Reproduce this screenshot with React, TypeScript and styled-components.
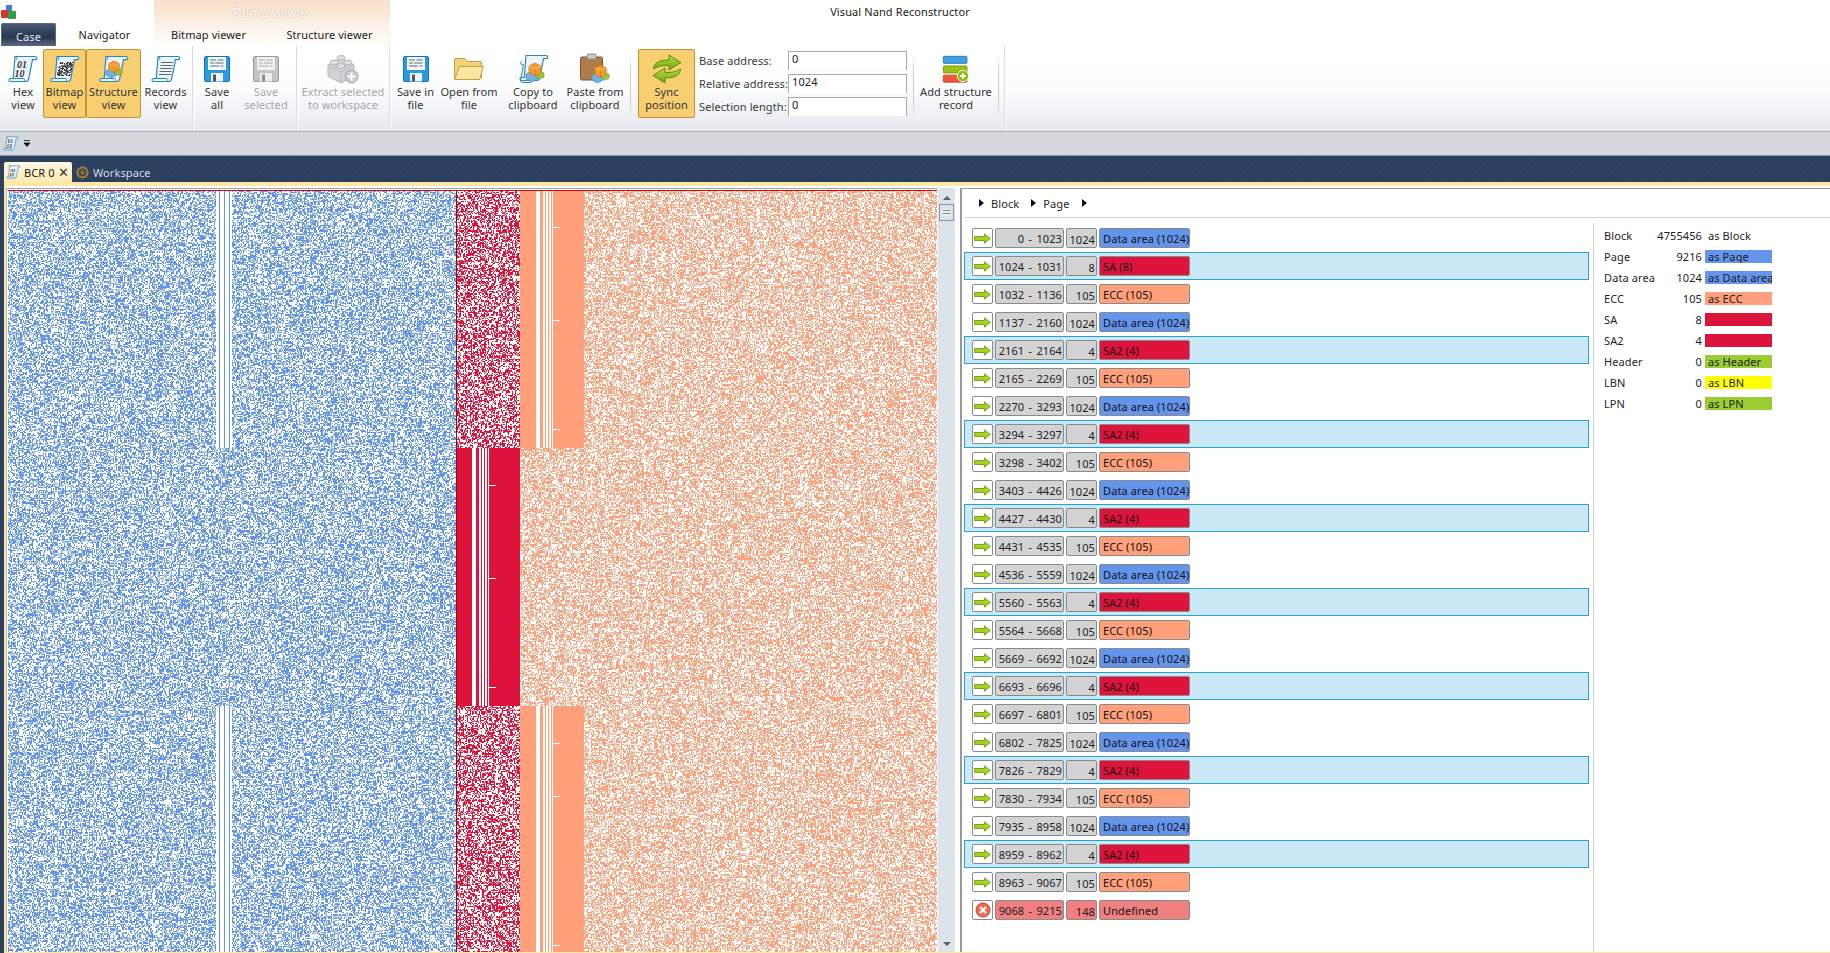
import React, { useEffect, useRef } from 'react';
import styled, { createGlobalStyle } from 'styled-components';

const BLUE = '#6495ed';
const CRIMSON = '#dc143c';
const SALMON = '#ffa07a';
const GREEN = '#9acd32';
const YELLOW = '#ffff00';
const CORAL = '#f08080';

const GlobalStyle = createGlobalStyle`
    html, body, #root {
        margin: 0;
        height: 100%;
    }
    body {
        font-family: "Noto Sans", "Open Sans", sans-serif;
        font-size: 11px;
        letter-spacing: 0.1px;
        color: #1b1b1b;
        background: #fff;
        overflow: hidden;
    }
`;

const Page = styled.div`
    width: 1830px;
    height: 953px;
    display: flex;
    flex-direction: column;
    position: relative;
    overflow: hidden;
`;

// --- header ---
const ContextBand = styled.div`
    position: absolute;
    left: 154px;
    top: 0;
    width: 236px;
    height: 46px;
    background: linear-gradient(#f7dfc8 0%, #fbeee0 45%, #ffffff 100%);
    text-align: center;
    line-height: 26px;
    color: #fff;
    font-size: 12px;
    text-shadow: 0 0 2px #c9a98c;
    padding-right: 2px;
    box-sizing: border-box;
`;

const TitleBar = styled.div`
    height: 23px;
    display: flex;
    align-items: center;
    justify-content: center;
    padding-right: 30px;
    position: relative;
    color: #1a1a1a;
`;

const AppLogo = styled.svg`
    position: absolute;
    left: 1px;
    top: 5px;
`;

const TabStrip = styled.div`
    height: 23px;
    display: flex;
    position: relative;
    padding-left: 1px;
`;

const CaseTab = styled.div`
    width: 55px;
    display: flex;
    align-items: center;
    justify-content: center;
    padding-top: 2px;
    box-sizing: border-box;
    color: #e6eaf0;
    border: 1px solid #5b6a80;
    border-bottom: none;
    border-radius: 2px 2px 0 0;
    background: linear-gradient(#4a5a74 0%, #2e3e5a 45%, #28374f 60%, #5b6a82 100%);
`;

const RibbonTab = styled.div<{ $w: number; $ml?: number; $active?: boolean }>`
    width: ${(p) => p.$w}px;
    margin-left: ${(p) => p.$ml || 0}px;
    display: flex;
    align-items: center;
    justify-content: center;
    box-sizing: border-box;
    padding-bottom: 1px;
    border: 1px solid ${(p) => (p.$active ? '#fdf3e8' : 'transparent')};
    border-bottom: none;
    border-radius: 2px 2px 0 0;
`;

const Ribbon = styled.div`
    height: 85px;
    display: flex;
    box-sizing: border-box;
    padding-left: 3px;
    background: linear-gradient(#ffffff 0%, #fbfcfc 50%, #e6e9ee 100%);
`;

const GroupEdge = styled.div<{ $ml?: number }>`
    width: 2px;
    margin-left: ${(p) => p.$ml || 0}px;
    flex: none;
    background: linear-gradient(90deg, #d8dbe0 50%, #ffffff 50%);
`;

const InnerSep = styled.div<{ $ml?: number; $mr?: number }>`
    width: 1px;
    height: 62px;
    margin: 10px ${(p) => p.$mr || 0}px 0 ${(p) => p.$ml || 0}px;
    flex: none;
    background: linear-gradient(#ffffff00, #c9ccd1 25%, #c9ccd1 75%, #ffffff00);
`;

const RibbonButton = styled.div<{ $w: number; $on?: boolean; $off?: boolean }>`
    width: ${(p) => p.$w}px;
    height: 69px;
    margin-top: 3px;
    flex: none;
    box-sizing: border-box;
    display: flex;
    flex-direction: column;
    align-items: center;
    padding-top: 3px;
    border: 1px solid ${(p) => (p.$on ? '#c2903f' : 'transparent')};
    border-radius: 2px;
    background: ${(p) => (p.$on ? '#f7cf70' : 'none')};
    color: ${(p) => (p.$off ? '#a6a8ab' : '#333')};
`;

const IconSlot = styled.div`
    height: 31px;
    display: flex;
    align-items: center;
    justify-content: center;
`;

const ButtonLabel = styled.div`
    line-height: 13px;
    text-align: center;
    white-space: pre;
    margin-top: 1px;
`;

const AddressFields = styled.div`
    width: 209px;
    margin: 5px 0 0 4px;
    flex: none;
    display: grid;
    grid-template-columns: 89px 119px;
    grid-auto-rows: 19px;
    row-gap: 4px;
    color: #3b3b3b;
`;

const FieldLabel = styled.div`
    line-height: 19px;
    white-space: nowrap;
`;

const FieldBox = styled.div`
    border: 1px solid #ababab;
    border-bottom: none;
    background: #fff;
    padding: 0 3px;
    line-height: 13px;
    color: #222;
`;

const ToolStrip = styled.div`
    height: 24px;
    box-sizing: border-box;
    border-top: 1px solid #a6adb5;
    background: #d5d8dd;
    display: flex;
    align-items: center;
    gap: 5px;
    padding-left: 3px;
`;

const DocTabs = styled.div`
    height: 27px;
    box-sizing: border-box;
    padding: 6px 0 0 4px;
    display: flex;
    align-items: stretch;
    border-top: 1px solid #8c95a3;
    background: repeating-linear-gradient(135deg, #2b3e5d 0 2px, #2d4160 2px 4px);
`;

const ActiveDocTab = styled.div`
    width: 68px;
    box-sizing: border-box;
    display: flex;
    align-items: center;
    padding: 0 3px 0 2px;
    gap: 3px;
    white-space: nowrap;
    color: #1a1a1a;
    background: linear-gradient(#fff9e6, #ffe9ac);
    border-radius: 2px 2px 0 0;
`;

const CloseMark = styled.span`
    margin-left: auto;
    font-size: 13px;
    line-height: 13px;
    color: #333;
`;

const IdleDocTab = styled.div`
    display: flex;
    align-items: center;
    gap: 3px;
    padding-left: 3px;
    color: #d8dee8;
`;

// --- document ---
const DocArea = styled.div`
    flex: 1;
    min-height: 0;
    padding-left: 4px;
    background: #2c3f5e;
    display: flex;
`;

const DocFrame = styled.div`
    flex: 1;
    min-width: 0;
    box-sizing: border-box;
    padding: 4px 0 1px 2px;
    background: #ffe8a6;
    display: flex;
`;

const DocBody = styled.div`
    flex: 1;
    min-width: 0;
    padding-top: 2px;
    background: #fff;
    display: flex;
`;

const BitmapPane = styled.div`
    width: 931px;
    flex: none;
    display: flex;
    box-sizing: border-box;
    border-left: 1px solid #b5b5b5;
    padding-left: 1px;
    border-top: 1px solid #a5a5a5;
`;

const BitmapCanvas = styled.canvas`
    display: block;
    margin-top: 1px;
`;

const ScrollBar = styled.div`
    width: 17px;
    margin-left: 1px;
    flex: none;
    background: #dde3ea;
    display: flex;
    flex-direction: column;
    align-items: center;
    padding-top: 8px;
    box-sizing: border-box;
`;

const ScrollArrow = styled.div<{ $down?: boolean }>`
    width: 0;
    height: 0;
    border-left: 4px solid transparent;
    border-right: 4px solid transparent;
    border-${(p) => (p.$down ? 'top' : 'bottom')}: 4px solid #56606c;
    ${(p) => (p.$down ? 'margin-top: auto; margin-bottom: 6px;' : '')}
`;

const ScrollThumb = styled.div`
    width: 15px;
    height: 17px;
    margin-top: 4px;
    box-sizing: border-box;
    border: 1px solid #8d97a3;
    background: repeating-linear-gradient(#eef2f6 0 2px, #7d8894 2px 3px);
    background-clip: content-box;
    padding: 4px 3px;
`;

const StructurePane = styled.div`
    margin-left: 5px;
    flex: 1;
    min-width: 0;
    display: flex;
    flex-direction: column;
    box-sizing: border-box;
    border-left: 2px solid #9a9a9a;
    border-top: 1px solid #9a9a9a;
`;

const Breadcrumb = styled.div`
    height: 29px;
    flex: none;
    box-sizing: border-box;
    margin-left: 2px;
    border-bottom: 1px solid #d4d4d4;
    display: flex;
    align-items: center;
    padding-left: 15px;
    color: #1f1f1f;
`;

const CrumbArrow = styled.span`
    width: 0;
    height: 0;
    border-top: 4px solid transparent;
    border-bottom: 4px solid transparent;
    border-left: 5px solid #111;
    margin-right: 7px;
`;

const CrumbText = styled.span`
    margin-right: 12px;
`;

const StructureBody = styled.div`
    flex: 1;
    min-height: 0;
    display: flex;
`;

const RecordList = styled.div`
    width: 631px;
    flex: none;
    padding: 6px 0 0 2px;
    box-sizing: border-box;
`;

const RecordRow = styled.div<{ $selected?: boolean }>`
    width: 625px;
    height: 28px;
    box-sizing: border-box;
    display: flex;
    align-items: center;
    gap: 2px;
    padding-left: 7px;
    border: 1px solid ${(p) => (p.$selected ? '#26a0da' : 'transparent')};
    background: ${(p) => (p.$selected ? '#cbe8f6' : 'transparent')};
`;

const Cell = styled.div`
    height: 20px;
    box-sizing: border-box;
    border: 1px solid #8a8a8a;
    border-radius: 2px;
    display: flex;
    align-items: center;
    white-space: nowrap;
`;

const GoButton = styled(Cell)`
    width: 21px;
    justify-content: center;
    background: #fff;
`;

const RangeCell = styled(Cell)<{ $bad?: boolean }>`
    width: 69px;
    justify-content: flex-end;
    padding-right: 1px;
    background: ${(p) => (p.$bad ? CORAL : '#d3d3d3')};
    color: #222;
`;

const RangeFrom = styled.span`
    width: 30px;
    text-align: right;
`;

const RangeDash = styled.span`
    width: 13px;
    text-align: center;
`;

const LengthCell = styled(Cell)<{ $bad?: boolean }>`
    width: 31px;
    justify-content: flex-end;
    padding: 2px 1px 0 0;
    background: ${(p) => (p.$bad ? CORAL : '#d3d3d3')};
`;

const KindCell = styled(Cell)<{ $color: string }>`
    width: 91px;
    padding-left: 3px;
    background: ${(p) => p.$color};
    color: #111;
`;

const Summary = styled.div`
    flex: 1;
    margin-top: 5px;
    padding: 2px 0 0 10px;
    border-left: 1px solid #d2d2d2;
`;

const SummaryRow = styled.div`
    height: 21px;
    display: flex;
    align-items: center;
`;

const SummaryName = styled.div`
    width: 48px;
    white-space: nowrap;
    color: #1f1f1f;
`;

const SummaryValue = styled.div`
    width: 50px;
    text-align: right;
`;

const SummaryTag = styled.div<{ $color?: string }>`
    width: 67px;
    height: 13px;
    margin-left: 3px;
    padding-left: 3px;
    box-sizing: border-box;
    line-height: 13px;
    white-space: nowrap;
    overflow: hidden;
    background: ${(p) => p.$color || 'transparent'};
`;

// --- icons ---
const Scroll = ({ children, size = 30 }: { children?: React.ReactNode; size?: number }) => (
    <svg width={size} height={(size * 28) / 30} viewBox="0 0 30 28">
        <path
            d="M7 1.5H27c2 0 2.4 3 .3 3.2H24.5L20.5 24.5c-.4 1.4-1 2-2.500 2H2.500c-2 0-2-3 0-3H5.200Z"
            fill="#eaf5fb"
            stroke="#2a86bd"
            strokeWidth="1.200"
        />
        <path d="M5 23.500H15.500c1 0 1.500 1.500 1 3" fill="none" stroke="#2a86bd" strokeWidth="1" />
        <path d="M7 1.500c1.500 0 2 1.500 1.500 3.200" fill="none" stroke="#2a86bd" strokeWidth="1" />
        {children}
    </svg>
);

const BinaryDigits = () => (
    <>
        <text x="9" y="13" fontFamily="Liberation Serif, serif" fontSize="10" fontWeight="700" fontStyle="italic" fill="#333">01</text>
        <text x="6.500" y="22" fontFamily="Liberation Serif, serif" fontSize="10" fontWeight="700" fontStyle="italic" fill="#333">10</text>
    </>
);

const Cubes = ({ x = 0, y = 0, s = 1 }: { x?: number; y?: number; s?: number }) => (
    <g transform={`translate(${x} ${y}) scale(${s})`}>
        <path d="M1 13l6-3 6 3v5l-6 3-6-3Z" fill="#6fb0e6" stroke="#3c7fb8" strokeWidth=".6" />
        <path d="M11 12l4-2 4 2v4l-4 2-4-2Z" fill="#9ac63a" stroke="#6d9420" strokeWidth=".6" />
        <path d="M4 5l6-3 6 3v7l-6 3-6-3Z" fill="#f29a2e" stroke="#c26f12" strokeWidth=".6" />
        <path d="M4 5l6 3 6-3" fill="none" stroke="#ffc97a" strokeWidth=".8" />
        <path d="M10 8v7" stroke="#c26f12" strokeWidth=".6" />
    </g>
);

const bitmapDots = (() => {
    const out: [number, number][] = [];
    let seed = 7;
    for (let y = 0; y < 14; y += 1) {
        for (let x = 0; x < 14; x += 1) {
            seed = (seed * 16807) % 2147483647;
            if (seed % 10 < 6) out.push([x, y]);
        }
    }
    return out;
})();

const HexIcon = () => (
    <Scroll>
        <BinaryDigits />
    </Scroll>
);

const BitmapIcon = () => (
    <Scroll>
        <g transform="translate(7.500 7) skewX(-8)">
            {bitmapDots.map(([x, y]) => (
                <rect key={`${x}-${y}`} x={x + 1.500} y={y} width="1" height="1" fill="#111" />
            ))}
        </g>
    </Scroll>
);

const StructureIcon = () => (
    <Scroll>
        <Cubes x={6} y={4} s={0.9} />
    </Scroll>
);

const RecordsIcon = () => (
    <Scroll>
        <g stroke="#666" strokeWidth="1">
            <path d="M10 7.500h12M9.500 10.500h12M9 13.500h12M8.500 16.500h12M8 19.500h12" />
        </g>
    </Scroll>
);

const Floppy = ({ muted }: { muted?: boolean }) => {
    const edge = muted ? '#9b9b9b' : '#1573b8';
    const body = muted ? '#c4c4c4' : '#2b9ae0';
    const ink = muted ? '#a9a9a9' : '#5d6b78';
    return (
        <svg width="28" height="28" viewBox="0 0 28 28">
            <path d="M1.500 3a1.500 1.500 0 0 1 1.500-1.500H25a1.500 1.500 0 0 1 1.500 1.500V25a1.500 1.500 0 0 1-1.500 1.500H3A1.500 1.500 0 0 1 1.500 25Z" fill={body} stroke={edge} />
            <rect x="5" y="2" width="18" height="13" fill={muted ? '#f1f1f1' : '#f4f8fb'} />
            <path d="M7 5h6M14.500 5h6M7 8h4M12 8h8.500M7 11h9M17.500 11h3" stroke={ink} strokeWidth="1" />
            <rect x="8" y="18" width="12" height="8.500" fill={muted ? '#ededed' : '#eef3f7'} />
            <rect x="10" y="19.500" width="3" height="7" fill={muted ? '#8f8f8f' : '#4d5a66'} />
        </svg>
    );
};

const LegoIcon = () => (
    <svg width="34" height="32" viewBox="0 0 34 32">
        <path d="M2 12l13-7 13 7v11l-13 7-13-7Z" fill="#d2d3d5" stroke="#b6b7b9" />
        <path d="M2 12l13 7 13-7M15 19v11" fill="none" stroke="#bcbdbf" />
        <ellipse cx="15" cy="5" rx="4" ry="2.500" fill="#dedfe0" stroke="#b6b7b9" />
        <ellipse cx="8" cy="9.500" rx="4" ry="2.500" fill="#dedfe0" stroke="#b6b7b9" />
        <ellipse cx="22" cy="9.500" rx="4" ry="2.500" fill="#dedfe0" stroke="#b6b7b9" />
        <ellipse cx="15" cy="13" rx="4" ry="2.500" fill="#dedfe0" stroke="#b6b7b9" />
        <circle cx="25.500" cy="23.500" r="6.500" fill="#c9cacc" stroke="#a9aaac" />
        <path d="M25.500 19.500v8M21.500 23.500h8" stroke="#fff" strokeWidth="2" />
    </svg>
);

const FolderIcon = () => (
    <svg width="32" height="28" viewBox="0 0 32 28">
        <path d="M1.500 5a1.500 1.500 0 0 1 1.500-1.500h9l2.500 3H27a1.500 1.500 0 0 1 1.500 1.500v15H1.500Z" fill="#f3d27c" stroke="#c99c3e" />
        <path d="M6.500 11.500H30.500L26.500 24.500H1.500Z" fill="#fbe6a2" stroke="#c99c3e" />
    </svg>
);

const CopyIcon = () => (
    <svg width="32" height="30" viewBox="0 0 32 30">
        <path d="M9 1.500H29c2 0 2.400 3 .3 3.200H26.500L22.500 24.500c-.4 1.400-1 2-2.500 2H4.500c-2 0-2-3 0-3H7.200Z" fill="#eaf5fb" stroke="#2a86bd" strokeWidth="1.200" />
        <path d="M5 7.500c-1.500 0-2 3-.2 3.200H6.500L3.500 26c-.3 1.700 1 2.500 2.500 2.500H14" fill="none" stroke="#2a86bd" strokeWidth="1" />
        <Cubes x={8} y={7} s={1} />
    </svg>
);

const ClipboardIcon = () => (
    <svg width="32" height="31" viewBox="0 0 32 31">
        <rect x="1.500" y="4" width="22" height="23" rx="1.500" fill="#b07d4a" stroke="#7a5228" />
        <rect x="8" y="1" width="9" height="5" rx="1" fill="#c8ccd0" stroke="#8a8e92" />
        <Cubes x={12} y={10} s={0.95} />
    </svg>
);

const SyncIcon = () => (
    <svg width="32" height="32" viewBox="0 0 32 32">
        <defs>
            <linearGradient id="syncFill" x1="0" y1="0" x2="0" y2="1">
                <stop offset="0" stopColor="#b9e23b" />
                <stop offset="1" stopColor="#6fa412" />
            </linearGradient>
        </defs>
        <path d="M2.500 16C3 9 10 7 18 7V2L30 9.500 18 17V12.500C11 12.500 7 13 2.500 16Z" fill="url(#syncFill)" stroke="#5c8c0f" />
        <path d="M29.500 16C29 23 22 25 14 25V30L2 22.500 14 15V19.500C21 19.500 25 19 29.500 16Z" fill="url(#syncFill)" stroke="#5c8c0f" />
    </svg>
);

const AddRecordIcon = () => (
    <svg width="28" height="28" viewBox="0 0 32 32">
        <rect x="1.500" y="1.500" width="27" height="8" rx="1" fill="#3f9fe0" stroke="#1f74b4" />
        <rect x="1.500" y="12.500" width="27" height="8" rx="1" fill="#9cc210" stroke="#72920a" />
        <rect x="1.500" y="23" width="27" height="8" rx="1" fill="#f0583a" stroke="#c23a20" />
        <circle cx="24" cy="24" r="6.500" fill="#8fbe12" stroke="#fff" />
        <path d="M24 20.500v7M20.500 24h7" stroke="#fff" strokeWidth="2" />
    </svg>
);

const RowArrow = () => (
    <svg width="17" height="11" viewBox="0 0 17 11">
        <path d="M.5 3.500H10.500V.8L16.300 5.500 10.500 10.200V7.500H.5Z" fill="#a6d321" stroke="#6d9a12" strokeWidth=".9" />
    </svg>
);

const RowError = () => (
    <svg width="16" height="16" viewBox="0 0 16 16">
        <circle cx="8" cy="8" r="7" fill="#ef6a50" stroke="#c9402a" />
        <path d="M5 5l6 6M11 5l-6 6" stroke="#fff" strokeWidth="2.200" />
    </svg>
);

const WheelIcon = () => (
    <svg width="15" height="15" viewBox="0 0 15 15">
        <circle cx="7.500" cy="7.500" r="5" fill="none" stroke="#a8803c" strokeWidth="2" />
        <circle cx="7.500" cy="7.500" r="1.800" fill="#d9a441" />
        <path d="M7.500 0v15M0 7.500h15M2.500 2.500l10 10M12.500 2.500l-10 10" stroke="#8a6a30" strokeWidth=".9" />
    </svg>
);

// --- bitmap ---
const CANVAS_W = 929;
const CANVAS_H = 762;
const ROW_TOPS = [0, 258, 516];
const CELL = 1830 / 1568; // the dump grid is a little coarser than a screen pixel
const SOLID_STRIPES: [number, number][] = [[16, 20], [23, 25], [26, 28], [29, 31], [32, 33]];

const drawBitmap = (canvas: HTMLCanvasElement) => {
    const ctx = canvas.getContext('2d');
    if (!ctx) return;
    ctx.fillStyle = '#fff';
    ctx.fillRect(0, 0, CANVAS_W, CANVAS_H);

    let s = 1234567;
    const rnd = () => {
        s = (s + 0x6d2b79f5) | 0;
        let t = Math.imul(s ^ (s >>> 15), 1 | s);
        t = (t + Math.imul(t ^ (t >>> 7), 61 | t)) ^ t;
        return ((t ^ (t >>> 14)) >>> 0) / 4294967296;
    };

    const noise = (x0: number, x1: number, y0: number, y1: number, color: string) => {
        ctx.fillStyle = color;
        const rows = Math.ceil((y1 - y0) / CELL);
        const cols = Math.ceil((x1 - x0) / CELL);
        for (let j = 0; j < rows; j += 1) {
            const top = y0 + Math.floor(j * CELL);
            const h = Math.min(y0 + Math.floor((j + 1) * CELL), y1) - top;
            for (let i = 0; i < cols; i += 1) {
                if (rnd() < 0.5) {
                    const left = x0 + Math.floor(i * CELL);
                    const w = Math.min(x0 + Math.floor((i + 1) * CELL), x1) - left;
                    ctx.fillRect(left, top, w, h);
                }
            }
        }
    };

    const solid = (x0: number, y0: number, y1: number, color: string, ticks: number[]) => {
        ctx.fillStyle = color;
        ctx.fillRect(x0, y0, 64, y1 - y0);
        ctx.fillStyle = '#fff';
        SOLID_STRIPES.forEach(([a, b]) => ctx.fillRect(x0 + a, y0, b - a, y1 - y0));
        ticks.forEach((t) => ctx.fillRect(x0 + 32, y0 + t, 8, 1));
    };

    const inner = 448; // start of the second column, in canvas x
    ROW_TOPS.forEach((top, i) => {
        const bottom = i < 2 ? top + 258 : CANVAS_H;
        if (i === 1) {
            noise(0, inner, top, bottom, BLUE);
            solid(inner, top, bottom, CRIMSON, [37, 130, 239]);
            noise(inner + 64, CANVAS_W, top, bottom, SALMON);
        } else {
            noise(0, 208, top, bottom, BLUE);
            ctx.fillStyle = BLUE;
            [211, 216, 221].forEach((x) => ctx.fillRect(x, top, 1, bottom - top));
            noise(224, inner, top, bottom, BLUE);
            noise(inner, inner + 64, top, bottom, CRIMSON);
            solid(inner + 64, top, bottom, SALMON, i === 0 ? [37, 130, 239] : [37, 90, 239]);
            noise(inner + 128, CANVAS_W, top, bottom, SALMON);
        }
    });

    ctx.fillStyle = '#e00000';
    ctx.fillRect(0, 0, CANVAS_W, 1);
    ctx.fillStyle = '#a80000';
    ctx.fillRect(inner, 0, 1, CANVAS_H);
};

const Bitmap = () => {
    const ref = useRef<HTMLCanvasElement>(null);
    useEffect(() => {
        if (ref.current) drawBitmap(ref.current);
    }, []);
    return <BitmapCanvas ref={ref} width={CANVAS_W} height={CANVAS_H} />;
};

// --- data ---
type Kind = 'data' | 'sa' | 'sa2' | 'ecc' | 'undef';

const KIND_COLOR: Record<Kind, string> = {
    data: BLUE,
    sa: CRIMSON,
    sa2: CRIMSON,
    ecc: SALMON,
    undef: CORAL,
};

const KIND_NAME: Record<Kind, string> = {
    data: 'Data area',
    sa: 'SA',
    sa2: 'SA2',
    ecc: 'ECC',
    undef: 'Undefined',
};

const records: { from: number; to: number; kind: Kind }[] = (() => {
    const out: { from: number; to: number; kind: Kind }[] = [
        { from: 0, to: 1023, kind: 'data' },
        { from: 1024, to: 1031, kind: 'sa' },
        { from: 1032, to: 1136, kind: 'ecc' },
    ];
    let at = 1137;
    for (let i = 0; i < 7; i += 1) {
        out.push({ from: at, to: at + 1023, kind: 'data' });
        out.push({ from: at + 1024, to: at + 1027, kind: 'sa2' });
        out.push({ from: at + 1028, to: at + 1132, kind: 'ecc' });
        at += 1133;
    }
    out.push({ from: at, to: 9215, kind: 'undef' });
    return out;
})();

const summary: { name: string; value: number; tag?: string; color?: string }[] = [
    { name: 'Block', value: 4755456, tag: 'as Block' },
    { name: 'Page', value: 9216, tag: 'as Page', color: BLUE },
    { name: 'Data area', value: 1024, tag: 'as Data area', color: BLUE },
    { name: 'ECC', value: 105, tag: 'as ECC', color: SALMON },
    { name: 'SA', value: 8, color: CRIMSON },
    { name: 'SA2', value: 4, color: CRIMSON },
    { name: 'Header', value: 0, tag: 'as Header', color: GREEN },
    { name: 'LBN', value: 0, tag: 'as LBN', color: YELLOW },
    { name: 'LPN', value: 0, tag: 'as LPN', color: GREEN },
];

const Button = ({ w, on, off, label, children }: { w: number; on?: boolean; off?: boolean; label: string; children: React.ReactNode }) => (
    <RibbonButton $w={w} $on={on} $off={off}>
        <IconSlot>{children}</IconSlot>
        <ButtonLabel>{label}</ButtonLabel>
    </RibbonButton>
);

export default function App() {
    return (
        <Page>
            <GlobalStyle />
            <ContextBand>Dump viewer</ContextBand>
            <TitleBar>
                <AppLogo width="15" height="14" viewBox="0 0 15 14">
                    <rect x="5" y="0" width="6" height="6" fill="#3f7fd0" />
                    <rect x="0" y="5" width="8" height="8" rx="1" fill="#d8342c" />
                    <rect x="7" y="6" width="8" height="8" rx="1" fill="#2fa04a" />
                </AppLogo>
                Visual Nand Reconstructor
            </TitleBar>
            <TabStrip>
                <CaseTab>Case</CaseTab>
                <RibbonTab $w={97}>Navigator</RibbonTab>
                <RibbonTab $w={111}>Bitmap viewer</RibbonTab>
                <RibbonTab $w={121} $ml={5} $active>Structure viewer</RibbonTab>
            </TabStrip>
            <Ribbon>
                <Button w={40} label={'Hex\nview'}><HexIcon /></Button>
                <Button w={43} on label={'Bitmap\nview'}><BitmapIcon /></Button>
                <Button w={55} on label={'Structure\nview'}><StructureIcon /></Button>
                <Button w={49} label={'Records\nview'}><RecordsIcon /></Button>
                <GroupEdge $ml={2} />
                <Button w={46} label={'Save\nall'}><Floppy /></Button>
                <Button w={52} off label={'Save\nselected'}><Floppy muted /></Button>
                <GroupEdge $ml={4} />
                <Button w={90} off label={'Extract selected\nto workspace'}><LegoIcon /></Button>
                <GroupEdge $ml={1} />
                <Button w={49} label={'Save in\nfile'}><Floppy /></Button>
                <Button w={58} label={'Open from\nfile'}><FolderIcon /></Button>
                <Button w={70} label={'Copy to\nclipboard'}><CopyIcon /></Button>
                <Button w={54} label={'Paste from\nclipboard'}><ClipboardIcon /></Button>
                <InnerSep $ml={8} $mr={7} />
                <Button w={57} on label={'Sync\nposition'}><SyncIcon /></Button>
                <AddressFields>
                    <FieldLabel>Base address:</FieldLabel>
                    <FieldBox>0</FieldBox>
                    <FieldLabel>Relative address:</FieldLabel>
                    <FieldBox>1024</FieldBox>
                    <FieldLabel>Selection length:</FieldLabel>
                    <FieldBox>0</FieldBox>
                </AddressFields>
                <InnerSep $ml={5} $mr={1} />
                <Button w={82} label={'Add structure\nrecord'}><AddRecordIcon /></Button>
                <InnerSep $ml={1} />
                <GroupEdge $ml={5} />
            </Ribbon>
            <ToolStrip>
                <Scroll size={16}>
                    <BinaryDigits />
                </Scroll>
                <svg width="7" height="7" viewBox="0 0 7 7">
                    <path d="M0 .5h6M0 3h6L3 6.500Z" stroke="#111" strokeWidth=".8" fill="#111" />
                </svg>
            </ToolStrip>
            <DocTabs>
                <ActiveDocTab>
                    <Scroll size={15}>
                        <BinaryDigits />
                    </Scroll>
                    BCR 0
                    <CloseMark>✕</CloseMark>
                </ActiveDocTab>
                <IdleDocTab>
                    <WheelIcon />
                    Workspace
                </IdleDocTab>
            </DocTabs>
            <DocArea>
                <DocFrame>
                    <DocBody>
                        <BitmapPane>
                            <Bitmap />
                        </BitmapPane>
                        <ScrollBar>
                            <ScrollArrow />
                            <ScrollThumb />
                            <ScrollArrow $down />
                        </ScrollBar>
                        <StructurePane>
                            <Breadcrumb>
                                <CrumbArrow />
                                <CrumbText>Block</CrumbText>
                                <CrumbArrow />
                                <CrumbText>Page</CrumbText>
                                <CrumbArrow />
                            </Breadcrumb>
                            <StructureBody>
                                <RecordList>
                                    {records.map((r) => {
                                        const len = r.to - r.from + 1;
                                        const bad = r.kind === 'undef';
                                        const selected = r.kind === 'sa' || r.kind === 'sa2';
                                        return (
                                            <RecordRow key={r.from} $selected={selected}>
                                                <GoButton>{bad ? <RowError /> : <RowArrow />}</GoButton>
                                                <RangeCell $bad={bad}>
                                                    <RangeFrom>{r.from}</RangeFrom>
                                                    <RangeDash>-</RangeDash>
                                                    <span>{r.to}</span>
                                                </RangeCell>
                                                <LengthCell $bad={bad}>{len}</LengthCell>
                                                <KindCell $color={KIND_COLOR[r.kind]}>
                                                    {bad ? KIND_NAME[r.kind] : `${KIND_NAME[r.kind]} (${len})`}
                                                </KindCell>
                                            </RecordRow>
                                        );
                                    })}
                                </RecordList>
                                <Summary>
                                    {summary.map((row) => (
                                        <SummaryRow key={row.name}>
                                            <SummaryName>{row.name}</SummaryName>
                                            <SummaryValue>{row.value}</SummaryValue>
                                            <SummaryTag $color={row.color}>{row.tag}</SummaryTag>
                                        </SummaryRow>
                                    ))}
                                </Summary>
                            </StructureBody>
                        </StructurePane>
                    </DocBody>
                </DocFrame>
            </DocArea>
        </Page>
    );
}
